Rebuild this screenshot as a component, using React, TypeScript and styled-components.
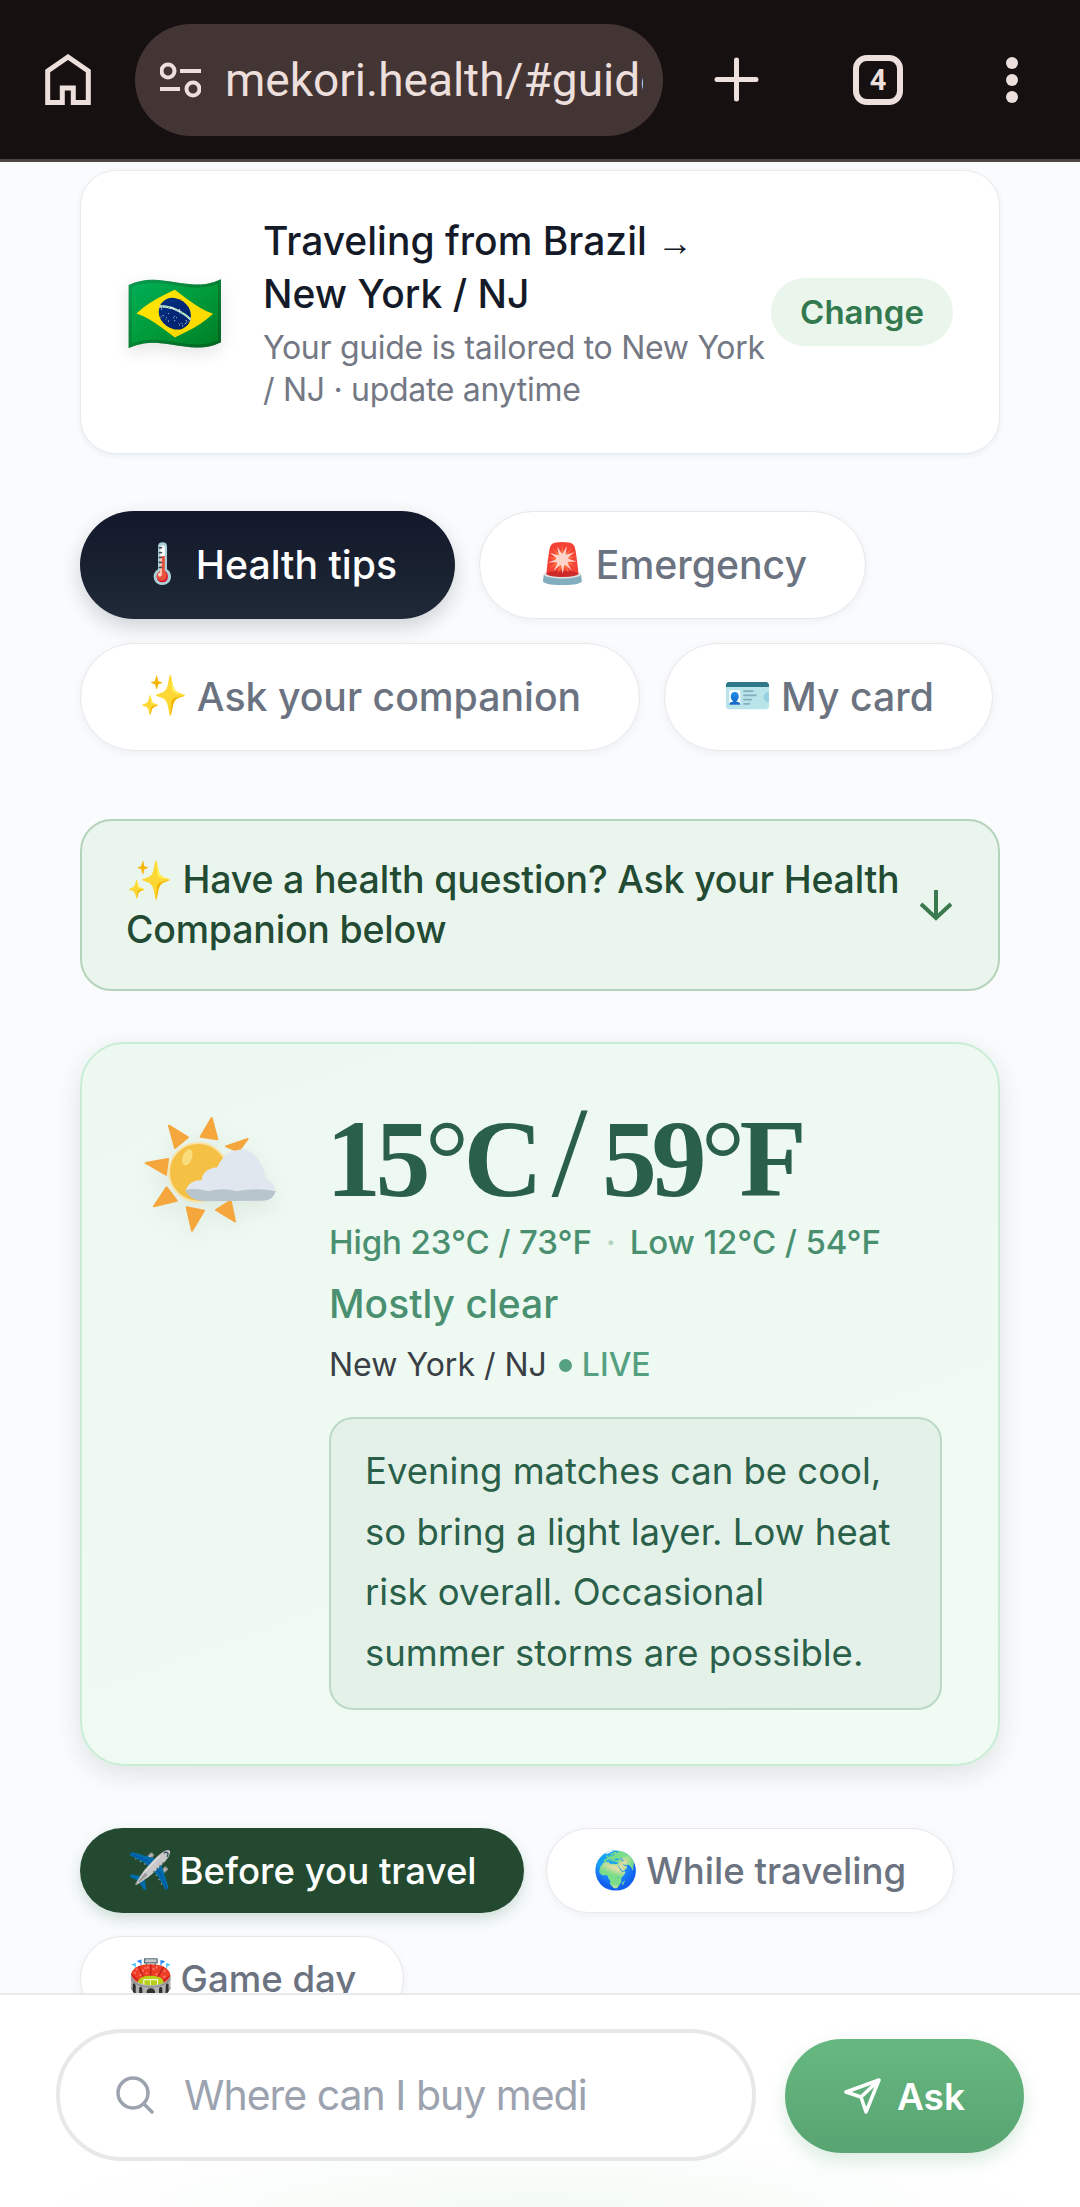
import React from 'react';
import styled, { createGlobalStyle } from 'styled-components';

const GlobalStyle = createGlobalStyle`
  html, body {
    margin: 0;
    padding: 0;
    background: #f9fbfd;
    font-family: Inter, "Noto Sans", sans-serif;
  }
  * { box-sizing: border-box; }
`;

const Screen = styled.div`
  position: relative;
  width: 1080px;
  height: 2207px;
  overflow: hidden;
  background: #f9fbfd;
`;

const BrowserBar = styled.header`
  height: 162px;
  background: #171010;
  border-bottom: 3px solid #4d4444;
  display: flex;
  align-items: center;
  padding: 0 62px 0 45px;
`;

const HomeButton = styled.svg`
  width: 46px;
  height: 51px;
  margin-right: 44px;
  flex: none;
`;

const UrlPill = styled.div`
  width: 528px;
  height: 112px;
  border-radius: 56px;
  background: #443535;
  display: flex;
  align-items: center;
  padding: 0 20px 0 25px;
  gap: 24px;
  flex: none;
`;

const UrlText = styled.div`
  flex: 1;
  overflow: hidden;
  white-space: nowrap;
  font-family: Roboto, sans-serif;
  font-size: 46px;
  color: #ecdfdc;
`;

const BarActions = styled.div`
  flex: 1;
  display: flex;
  align-items: center;
  gap: 94px;
  padding-left: 51px;
`;

const TabCount = styled.div`
  width: 50px;
  height: 50px;
  margin-right: 9px;
  border: 6px solid #ecdfdc;
  border-radius: 14px;
  color: #ecdfdc;
  font-family: Roboto, sans-serif;
  font-size: 29px;
  font-weight: 700;
  display: flex;
  align-items: center;
  justify-content: center;
`;

const Content = styled.main`
  padding: 8px 80px 0;
`;

const Card = styled.section`
  background: #fff;
  border: 1px solid #e8ebee;
  border-radius: 36px;
  box-shadow: 0 2px 6px rgba(20, 30, 40, 0.06);
  height: 284px;
  display: flex;
  align-items: center;
  padding: 0 46px 0 44px;
`;

const Flag = styled.div`
  font-size: 80px;
  width: 138px;
  flex: none;
  line-height: 1;
  filter: drop-shadow(0 6px 8px rgba(0, 0, 0, 0.1));
`;

const OriginText = styled.div`
  width: 508px;
  flex: none;
`;

const OriginTitle = styled.div`
  font-size: 39px;
  line-height: 53px;
  font-weight: 500;
  color: #141a28;
  margin-bottom: 7px;
`;

const TitleArrow = styled.span`
  font-family: "Liberation Sans", sans-serif;
  font-size: 36px;
  line-height: 1;
`;

const OriginSub = styled.div`
  font-size: 32px;
  line-height: 42px;
  letter-spacing: -0.3px;
  color: #737884;
`;

const ChangeButton = styled.div`
  width: 182px;
  height: 68px;
  border-radius: 34px;
  background: #eaf5ec;
  color: #33794f;
  font-size: 33px;
  font-weight: 600;
  display: flex;
  align-items: center;
  justify-content: center;
  flex: none;
`;

const TabRow = styled.nav`
  margin-top: 57px;
  display: flex;
  flex-wrap: wrap;
  gap: 24px;
`;

const MainTab = styled.div<{ $active?: boolean }>`
  height: 108px;
  padding: 0 58px 2px;
  border-radius: 54px;
  display: flex;
  align-items: center;
  gap: 9px;
  font-size: 39.2px;
  font-weight: 550;
  white-space: nowrap;
  color: ${(p) => (p.$active ? '#fff' : '#6b7280')};
  background: ${(p) => (p.$active ? 'linear-gradient(180deg, #12182a, #1f2937)' : '#fff')};
  border: ${(p) => (p.$active ? 'none' : '1.5px solid #e6e8ec')};
  box-shadow: ${(p) => (p.$active ? '0 8px 20px rgba(20,26,40,0.18)' : '0 2px 8px rgba(20,30,40,0.05)')};
`;

const Banner = styled.div`
  margin-top: 68px;
  height: 172px;
  background: #eaf6ed;
  border: 2px solid #b5d3ba;
  border-radius: 32px;
  display: flex;
  align-items: center;
  justify-content: space-between;
  padding: 0 44px;
  gap: 6px;
`;

const BannerText = styled.div`
  font-size: 37.5px;
  line-height: 50px;
  font-weight: 500;
  letter-spacing: -0.2px;
  color: #234a33;
`;

const WeatherCard = styled.section`
  margin-top: 51px;
  height: 724px;
  border: 2px solid #c9ecd5;
  border-radius: 44px;
  background: linear-gradient(160deg, #ecf8f0, #f0fbf4);
  box-shadow: 0 8px 24px rgba(30, 60, 40, 0.12);
  display: flex;
  padding: 60px 56px 0 48px;
`;

const WeatherIcon = styled.svg`
  width: 160px;
  height: 145px;
  margin-right: 39px;
  flex: none;
  filter: drop-shadow(0 8px 10px rgba(0, 0, 0, 0.06));
`;

const WeatherBody = styled.div`
  flex: 1;
`;

const Temperature = styled.div`
  font-family: "Liberation Serif", serif;
  font-weight: 700;
  font-size: 110px;
  line-height: 110px;
  letter-spacing: -5.5px;
  margin-left: -3px;
  color: #2a6049;
  white-space: nowrap;
`;

const TempThin = styled.span`
  font-weight: 400;
`;

const TempSlash = styled.span`
  font-weight: 400;
  font-size: 130px;
  line-height: 0;
  margin: 0 20px 0 14px;
`;

const HighLow = styled.div`
  margin-top: 6px;
  font-size: 33px;
  line-height: 44px;
  font-weight: 500;
  letter-spacing: -0.1px;
  color: #4a9070;
`;

const Separator = styled.span`
  color: #b5d3c2;
  margin: 0 14px;
`;

const Condition = styled.div`
  margin-top: 15px;
  font-size: 39px;
  line-height: 50px;
  font-weight: 500;
  color: #4a9070;
`;

const Place = styled.div`
  margin-top: 15px;
  font-size: 32px;
  line-height: 42px;
  color: #3a3f45;
  display: flex;
  align-items: center;
  gap: 10px;
`;

const LiveDot = styled.span`
  width: 13px;
  height: 13px;
  margin-left: 2px;
  border-radius: 50%;
  background: #55a080;
`;

const LiveTag = styled.span`
  color: #55a080;
  font-size: 32px;
  font-weight: 500;
`;

const Advice = styled.div`
  margin-top: 31px;
  background: #e4f1e8;
  border: 2px solid #bcd9c5;
  border-radius: 24px;
  padding: 22px 34px 25px;
  font-size: 36.5px;
  line-height: 60.5px;
  color: #2a6049;
`;

const PhaseRow = styled.nav`
  margin-top: 62px;
  display: flex;
  flex-wrap: wrap;
  gap: 23px 22px;
`;

const PhaseTab = styled.div<{ $active?: boolean }>`
  height: 85px;
  padding: 0 47px;
  border-radius: 43px;
  display: flex;
  align-items: center;
  gap: 7px;
  font-size: 36.6px;
  font-weight: 550;
  white-space: nowrap;
  color: ${(p) => (p.$active ? '#fff' : '#6b7280')};
  background: ${(p) => (p.$active ? '#234a30' : '#fff')};
  border: ${(p) => (p.$active ? 'none' : '1.5px solid #e6e8ec')};
  box-shadow: ${(p) => (p.$active ? '0 6px 14px rgba(40,110,70,0.2)' : '0 2px 8px rgba(20,30,40,0.05)')};
`;

const AskDock = styled.footer`
  position: absolute;
  left: 0;
  right: 0;
  bottom: 0;
  height: 214px;
  background: radial-gradient(ellipse 46% 70px at 50% 100%, #f3faf4, transparent), #fff;
  border-top: 2px solid #e8e9ec;
  display: flex;
  align-items: flex-start;
  padding: 34px 56px 0 56px;
`;

const AskInput = styled.div`
  width: 700px;
  height: 132px;
  border: 4px solid #e7e8ea;
  border-radius: 66px;
  background: #fff;
  display: flex;
  align-items: center;
  padding-left: 56px;
  gap: 30px;
  font-size: 41px;
  letter-spacing: -1px;
  color: #9ca3af;
  white-space: nowrap;
`;

const AskButton = styled.div`
  margin: 10px 0 0 29px;
  width: 239px;
  height: 114px;
  border-radius: 57px;
  background: linear-gradient(180deg, #67b880, #58a472);
  box-shadow: 0 8px 18px rgba(80, 170, 110, 0.22);
  color: #fff;
  font-size: 37px;
  font-weight: 600;
  display: flex;
  align-items: center;
  justify-content: center;
  gap: 16px;
`;

const Emoji = styled.span`
  font-family: "Noto Color Emoji", sans-serif;
  font-weight: 400;
`;

const sunRays = [
  '245,42 212,98 262,106',
  '117,65 135,132 174,100',
  '353,105 288,127 325,142',
  '47,177 108,212 114,165',
  '72,307 140,290 110,250',
  '186,380 222,320 170,310',
  '315,352 302,290 258,318',
];

const App = () => (
  <Screen>
    <GlobalStyle />
    <BrowserBar>
      <HomeButton viewBox="0 0 46 51" fill="none" stroke="#ecdfdc" strokeWidth="5">
        <path d="M2.7 17 L23 3 L43.3 17 V48.5 H28.3 V34 H17.3 V48.5 H2.7 Z" />
      </HomeButton>
      <UrlPill>
        <svg width="41" height="36" viewBox="0 0 41 36" fill="none" stroke="#ecdfdc" strokeWidth="4" style={{ flex: 'none' }}>
          <circle cx="8" cy="9" r="6.5" />
          <path d="M20 9 H41 M0 27 H20" />
          <circle cx="33" cy="27" r="6.5" />
        </svg>
        <UrlText>mekori.health/#guide</UrlText>
      </UrlPill>
      <BarActions>
        <svg width="45" height="45" viewBox="0 0 45 45" stroke="#ecdfdc" strokeWidth="5" strokeLinecap="round" style={{ flex: 'none' }}>
          <path d="M22.5 3 V42 M3 22.5 H42" />
        </svg>
        <TabCount>4</TabCount>
        <svg width="12" height="46" viewBox="0 0 12 46" fill="#ecdfdc" style={{ flex: 'none' }}>
          <circle cx="6" cy="6" r="6" />
          <circle cx="6" cy="23" r="6" />
          <circle cx="6" cy="40" r="6" />
        </svg>
      </BarActions>
    </BrowserBar>
    <Content>
      <Card>
        <Flag>🇧🇷</Flag>
        <OriginText>
          <OriginTitle>Traveling from Brazil <TitleArrow>→</TitleArrow> New York / NJ</OriginTitle>
          <OriginSub>Your guide is tailored to New York / NJ · update anytime</OriginSub>
        </OriginText>
        <ChangeButton>Change</ChangeButton>
      </Card>
      <TabRow>
        <MainTab $active><Emoji>🌡️</Emoji>Health tips</MainTab>
        <MainTab><Emoji>🚨</Emoji>Emergency</MainTab>
        <MainTab><Emoji>✨</Emoji>Ask your companion</MainTab>
        <MainTab><Emoji>🪪</Emoji>My card</MainTab>
      </TabRow>
      <Banner>
        <BannerText>✨ Have a health question? Ask your Health Companion below</BannerText>
        <svg width="36" height="32" viewBox="0 0 36 32" fill="none" stroke="#3b7a4f" strokeWidth="4" style={{ flex: 'none' }}>
          <path d="M18 1 V29 M3 15 L18 29 L33 15" />
        </svg>
      </Banner>
      <WeatherCard>
        <WeatherIcon viewBox="0 0 480 435">
          {sunRays.map((points) => (
            <polygon key={points} points={points} fill="#f5a63c" stroke="#f5a63c" strokeWidth="6" strokeLinejoin="round" />
          ))}
          <circle cx="205" cy="205" r="88" fill="#f4c145" stroke="#f9e3a6" strokeWidth="6" />
          <ellipse cx="172" cy="160" rx="14" ry="25" transform="rotate(20 172 160)" fill="#f9dd7d" />
          <path d="M168 258 Q 176 230 215 228 Q 218 195 262 190 Q 282 140 340 135 Q 395 150 408 225 Q 437 240 437 265 L 300 285 Z" fill="#e0e7ee" />
          <path d="M165 258 Q 200 250 235 262 Q 280 250 320 262 Q 380 250 437 262 Q 430 290 400 290 L 220 292 Q 180 290 165 258 Z" fill="#b8c5cd" />
        </WeatherIcon>
        <WeatherBody>
          <Temperature>15<TempThin>°</TempThin>C<TempSlash>/</TempSlash>59<TempThin>°</TempThin>F</Temperature>
          <HighLow>High 23°C / 73°F<Separator>·</Separator>Low 12°C / 54°F</HighLow>
          <Condition>Mostly clear</Condition>
          <Place>New York / NJ <LiveDot /><LiveTag>LIVE</LiveTag></Place>
          <Advice>Evening matches can be cool, so bring a light layer. Low heat risk overall. Occasional summer storms are possible.</Advice>
        </WeatherBody>
      </WeatherCard>
      <PhaseRow>
        <PhaseTab $active><Emoji>✈️</Emoji>Before you travel</PhaseTab>
        <PhaseTab><Emoji>🌍</Emoji>While traveling</PhaseTab>
        <PhaseTab><Emoji>🏟️</Emoji>Game day</PhaseTab>
      </PhaseRow>
    </Content>
    <AskDock>
      <AskInput>
        <svg width="38" height="38" viewBox="0 0 38 38" fill="none" stroke="#9ca3af" strokeWidth="3.5" strokeLinecap="round" style={{ flex: 'none' }}>
          <circle cx="17" cy="17" r="15" />
          <path d="M28 28 L36 36" />
        </svg>
        Where can I buy medi
      </AskInput>
      <AskButton>
        <svg width="37" height="36" viewBox="0 0 37 36" fill="none" stroke="#fff" strokeWidth="3.5" strokeLinejoin="round" style={{ flex: 'none' }}>
          <path d="M35 2 L2 14 L17 19 L22 34 Z M17 19 L35 2" />
        </svg>
        Ask
      </AskButton>
    </AskDock>
  </Screen>
);

export default App;
